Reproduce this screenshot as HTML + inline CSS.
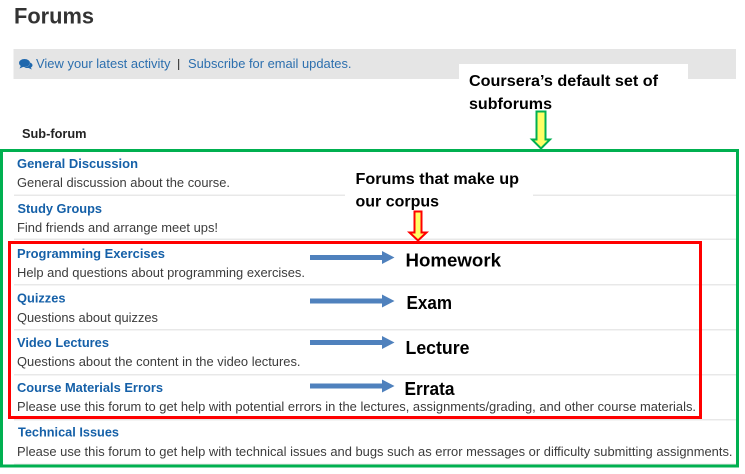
<!DOCTYPE html>
<html>
<head>
<meta charset="utf-8">
<title>Forums</title>
<style>
html,body{margin:0;padding:0;background:#fff;width:745px;height:474px;overflow:hidden}
svg{display:block;position:absolute;left:0;top:0;filter:blur(.3px)}
.s{font-family:"Liberation Sans",sans-serif}
.t{font:bold 13px "Liberation Sans",sans-serif;fill:#1560a8}
.d{font:12.5px "Liberation Sans",sans-serif;fill:#3c3c3c}
.l{font:13px "Liberation Sans",sans-serif;fill:#2c6fae}
.a{font:bold 16px "Liberation Sans",sans-serif;fill:#000}
.b{font:bold 18px "Liberation Sans",sans-serif;fill:#000}
.r{fill:#e8e8e8}
</style>
</head>
<body>
<svg width="745" height="474" viewBox="0 0 745 474" xmlns="http://www.w3.org/2000/svg">
<rect width="745" height="474" fill="#fff"/>
<text class="s" x="14" y="23.5" font-size="22" font-weight="bold" fill="#333" textLength="80" lengthAdjust="spacingAndGlyphs">Forums</text>
<rect x="13.5" y="49" width="722.5" height="30" fill="#e5e5e5"/>
<ellipse cx="24.5" cy="63" rx="5.5" ry="4" fill="#1f68ad"/>
<path d="M21 65.500L19.500 68.500L24 66.500Z" fill="#1f68ad"/>
<path d="M30 62.500C31.500 63 32.500 64 32.500 65.200C32.500 66.200 31.800 67 30.800 67.500L31.800 69.500L28.600 68C27 68.200 25.200 67.900 24.200 67.200C27.500 67.200 30.500 65.500 30 62.500Z" fill="#1f68ad"/>
<text class="l" x="36" y="68" textLength="134.500" lengthAdjust="spacingAndGlyphs">View your latest activity</text>
<rect x="178" y="59" width="1.200" height="11" fill="#444"/>
<text class="l" x="188" y="68" textLength="163.500" lengthAdjust="spacingAndGlyphs">Subscribe for email updates.</text>
<text class="s" x="22" y="138" font-size="12.500" font-weight="bold" fill="#222" textLength="64.500" lengthAdjust="spacingAndGlyphs">Sub-forum</text>
<rect class="r" x="14" y="194.500" width="722" height="1.500"/>
<rect class="r" x="14" y="238.500" width="722" height="1.500"/>
<rect class="r" x="14" y="284" width="722" height="1.500"/>
<rect class="r" x="14" y="329" width="722" height="1.500"/>
<rect class="r" x="14" y="374" width="722" height="1.500"/>
<rect class="r" x="14" y="419" width="722" height="1.500"/>
<rect class="r" x="14" y="463.500" width="722" height="1.500"/>
<text class="t" x="17" y="168" textLength="121" lengthAdjust="spacingAndGlyphs">General Discussion</text>
<text class="d" x="17" y="187" textLength="213" lengthAdjust="spacingAndGlyphs">General discussion about the course.</text>
<text class="t" x="17.500" y="213" textLength="84.500" lengthAdjust="spacingAndGlyphs">Study Groups</text>
<text class="d" x="17" y="232" textLength="201" lengthAdjust="spacingAndGlyphs">Find friends and arrange meet ups!</text>
<text class="t" x="17" y="258" textLength="148" lengthAdjust="spacingAndGlyphs">Programming Exercises</text>
<text class="d" x="17" y="277" textLength="288" lengthAdjust="spacingAndGlyphs">Help and questions about programming exercises.</text>
<text class="t" x="17" y="302.500" textLength="48.500" lengthAdjust="spacingAndGlyphs">Quizzes</text>
<text class="d" x="17" y="322" textLength="141" lengthAdjust="spacingAndGlyphs">Questions about quizzes</text>
<text class="t" x="17" y="347" textLength="92" lengthAdjust="spacingAndGlyphs">Video Lectures</text>
<text class="d" x="17" y="366" textLength="283.500" lengthAdjust="spacingAndGlyphs">Questions about the content in the video lectures.</text>
<text class="t" x="17" y="392" textLength="146" lengthAdjust="spacingAndGlyphs">Course Materials Errors</text>
<text class="d" x="17" y="411" textLength="679" lengthAdjust="spacingAndGlyphs">Please use this forum to get help with potential errors in the lectures, assignments/grading, and other course materials.</text>
<text class="t" x="18" y="436.500" textLength="101" lengthAdjust="spacingAndGlyphs">Technical Issues</text>
<text class="d" x="17" y="456" textLength="715.500" lengthAdjust="spacingAndGlyphs">Please use this forum to get help with technical issues and bugs such as error messages or difficulty submitting assignments.</text>
<rect x="459" y="64" width="229" height="46" fill="#fff"/>
<rect x="345" y="165" width="188" height="31" fill="#fff"/>
<rect x="345" y="196" width="94" height="15" fill="#fff"/>
<rect x="1.500" y="150.500" width="736" height="315.500" fill="none" stroke="#00b050" stroke-width="3"/>
<rect x="9.500" y="242.500" width="691" height="175" fill="none" stroke="#f00" stroke-width="3"/>
<path d="M536.500 111.500H545.500V139.500H550L541 148.500L532 139.500H536.500Z" fill="#ffff66" stroke="#00b050" stroke-width="2"/>
<path d="M414.500 211.500H421.500V232.500H426.500L418 240.500L409.500 232.500H414.500Z" fill="#ffff66" stroke="#f00" stroke-width="2"/>
<path d="M310 255H382V251L394.500 257.500L382 264V260H310Z" fill="#4f81bd"/>
<path d="M310 298.500H382V294.500L394.500 301L382 307.500V303.500H310Z" fill="#4f81bd"/>
<path d="M310 340H382V336L394.500 342.500L382 349V345H310Z" fill="#4f81bd"/>
<path d="M310 383.500H382V379.500L394.500 386L382 392.500V388.500H310Z" fill="#4f81bd"/>
<text class="a" x="469" y="86" textLength="189" lengthAdjust="spacingAndGlyphs">Coursera’s default set of</text>
<text class="a" x="469" y="109" textLength="83" lengthAdjust="spacingAndGlyphs">subforums</text>
<text class="a" x="355.500" y="184" textLength="163.500" lengthAdjust="spacingAndGlyphs">Forums that make up</text>
<text class="a" x="355.500" y="206.500" textLength="83.500" lengthAdjust="spacingAndGlyphs">our corpus</text>
<text class="b" x="405.500" y="266.500" textLength="95.500" lengthAdjust="spacingAndGlyphs">Homework</text>
<text class="b" x="406.500" y="309" textLength="45.500" lengthAdjust="spacingAndGlyphs">Exam</text>
<text class="b" x="405.500" y="354" textLength="64" lengthAdjust="spacingAndGlyphs">Lecture</text>
<text class="b" x="404.500" y="395" textLength="50" lengthAdjust="spacingAndGlyphs">Errata</text>
</svg>
</body>
</html>
